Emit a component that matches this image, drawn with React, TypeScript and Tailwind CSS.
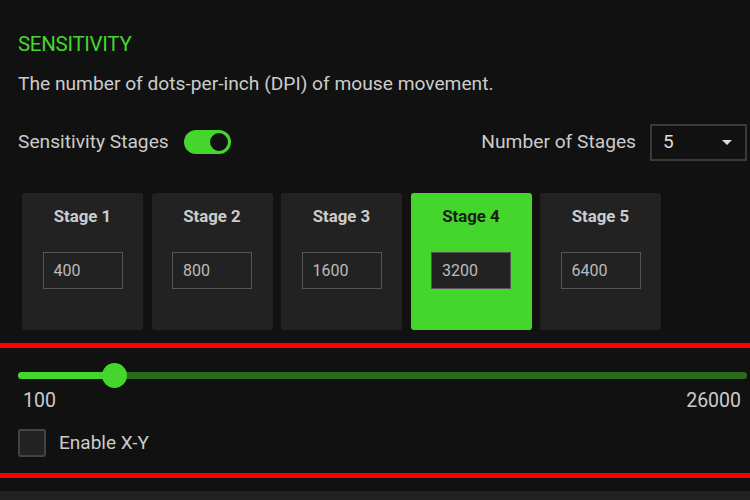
import { useState } from "react";

const STAGES = [
  { label: "Stage 1", dpi: "400" },
  { label: "Stage 2", dpi: "800" },
  { label: "Stage 3", dpi: "1600" },
  { label: "Stage 4", dpi: "3200" },
  { label: "Stage 5", dpi: "6400" },
];

export default function App() {
  const [active, setActive] = useState(3);
  const [enabled, setEnabled] = useState(true);
  const [xy, setXy] = useState(false);

  return (
    <div className="h-[500px] w-[750px] overflow-hidden bg-[#111111] font-['Roboto',sans-serif] text-[#cccccc]">
      {/* Header */}
      <div className="pl-[18px] pr-[3px] pt-[32px]">
        <h2 className="text-[20.5px] leading-[24px] tracking-[-0.3px] text-[#44d62c]">
          SENSITIVITY
        </h2>
        <p className="mt-[16px] text-[19.2px] leading-[24px] text-[#cccccc]">
          The number of dots-per-inch (DPI) of mouse movement.
        </p>
        <div className="mt-[28px] flex h-[36px] items-center justify-between">
          <div className="flex items-center gap-[15px]">
            <span className="text-[19.2px]">Sensitivity Stages</span>
            <button
              onClick={() => setEnabled(!enabled)}
              className={`flex h-[24px] w-[47px] items-center rounded-full px-[1px] ${
                enabled ? "justify-end bg-[#44d62c]" : "justify-start bg-[#444]"
              }`}
            >
              <span className="h-[22px] w-[22px] rounded-full border-2 border-[#44d62c] bg-[#111111]" />
            </button>
          </div>
          <div className="flex items-center gap-[14px]">
            <span className="text-[19.2px]">Number of Stages</span>
            <div className="flex h-[37px] w-[97px] items-center justify-between border-2 border-[#3a3a3a] pl-[11px] pr-[13px]">
              <span className="text-[19px] text-[#dddddd]">5</span>
              <svg width="10" height="5" viewBox="0 0 10 5">
                <path d="M0 0h10L5 5z" fill="#dddddd" />
              </svg>
            </div>
          </div>
        </div>
      </div>

      {/* Stage cards */}
      <div className="ml-[22px] mt-[33px] flex gap-[8.5px]">
        {STAGES.map((s, i) => (
          <div
            key={s.label}
            onClick={() => setActive(i)}
            className={`flex h-[137px] w-[121px] flex-col items-center rounded-[3px] pt-[12px] ${
              active === i ? "bg-[#44d62c]" : "bg-[#222222]"
            }`}
          >
            <span
              className={`text-[16.8px] font-bold leading-[22px] ${
                active === i ? "text-[#1a1a1a]" : "text-[#cccccc]"
              }`}
            >
              {s.label}
            </span>
            <div className="mt-[25px] flex h-[37px] w-[80px] items-center border-[1.5px] border-[#555555] bg-[#222222] pl-[10px] text-[16px] text-[#bbbbbb]">
              {s.dpi}
            </div>
          </div>
        ))}
      </div>

      <div className="mt-[13px] h-[5px] w-full bg-[#ff0000]" />

      {/* Slider */}
      <div className="pl-[18px] pr-[3px]">
        <div className="relative mt-[15px] h-[25px]">
          <div className="absolute left-0 right-0 top-[9px] h-[7px] rounded-full bg-[#2b6b20]" />
          <div className="absolute left-0 top-[9px] h-[7px] w-[96px] rounded-full bg-[#44d62c]" />
          <div className="absolute left-[84px] top-0 h-[25px] w-[25px] rounded-full bg-[#44d62c]" />
        </div>
        <div className="mt-[1px] flex justify-between pl-[5px] pr-[6px] text-[19.5px] leading-[24px] text-[#cccccc]">
          <span>100</span>
          <span>26000</span>
        </div>
        <label className="mt-[16px] flex items-center gap-[13px]">
          <button
            onClick={() => setXy(!xy)}
            className="h-[28px] w-[28px] rounded-[3px] border-2 border-[#444444] bg-[#222222]"
          />
          <span className="text-[19px]">Enable X-Y</span>
        </label>
      </div>

      <div className="mt-[15px] h-[5px] w-full bg-[#ff0000]" />
      <div className="mt-[13px] h-[20px] w-full bg-[#222222]" />
    </div>
  );
}
